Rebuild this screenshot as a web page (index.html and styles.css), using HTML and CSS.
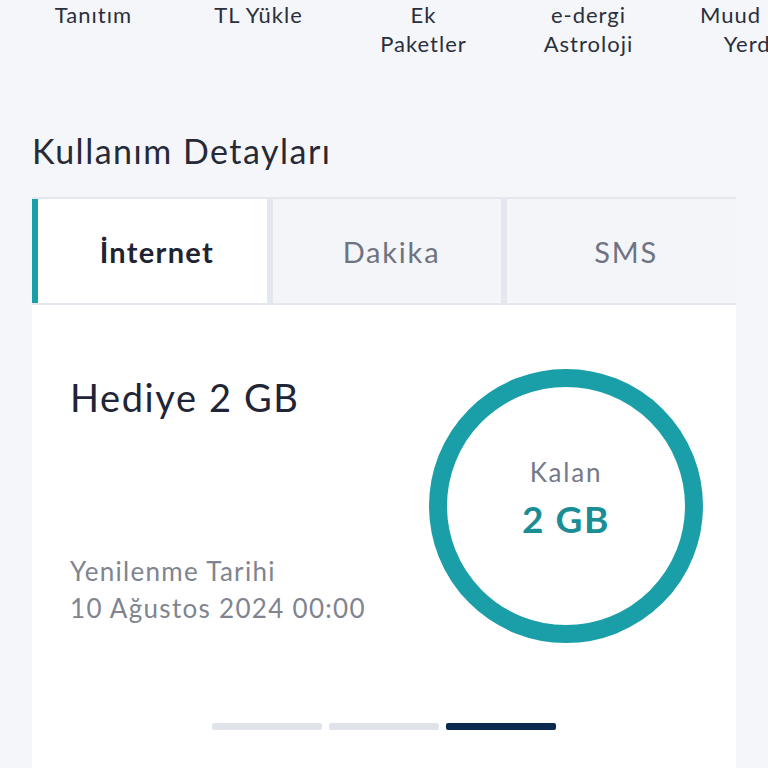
FILE: index.html
```html
<!DOCTYPE html>
<html lang="tr">
<head>
  <meta charset="utf-8">
  <title>Kullanım Detayları</title>
  <link rel="stylesheet" href="styles.css">
</head>
<body>
  <div class="shortcuts">
    <div class="shortcut"><span class="shortcut-label">Tanıtım</span></div>
    <div class="shortcut"><span class="shortcut-label">TL Yükle</span></div>
    <div class="shortcut"><span class="shortcut-label">Ek Paketler</span></div>
    <div class="shortcut"><span class="shortcut-label">e-dergi Astroloji</span></div>
    <div class="shortcut"><span class="shortcut-label">Muud Her Yerde</span></div>
  </div>

  <section class="usage">
    <h2 class="usage-title">Kullanım Detayları</h2>

    <div class="tabs">
      <div class="tab active">İnternet</div>
      <div class="tab">Dakika</div>
      <div class="tab">SMS</div>
    </div>

    <div class="usage-card">
      <div class="usage-body">
        <div class="usage-info">
          <div class="package-name">Hediye 2 GB</div>
          <div class="renewal">
            <div>Yenilenme Tarihi</div>
            <div>10 Ağustos 2024 00:00</div>
          </div>
        </div>
        <div class="ring">
          <div class="ring-label">Kalan</div>
          <div class="ring-value">2 GB</div>
        </div>
      </div>

      <div class="pager">
        <span class="pager-dot"></span>
        <span class="pager-dot"></span>
        <span class="pager-dot current"></span>
      </div>
    </div>
  </section>
</body>
</html>
```

FILE: styles.css
```css
body {
  margin: 0;
  font-family: Lato, "Noto Sans", sans-serif;
  background-color: #f5f6f9;
  color: #232838;
  overflow: hidden;
}

/* quick action row at the top */
.shortcuts {
  display: grid;
  grid-template-columns: repeat(5, 165px);
  padding-left: 11px;
  height: 58px;
  width: 900px;
}

.shortcut {
  display: flex;
  justify-content: center;
}

.shortcut-label {
  width: 110px;
  text-align: center;
  font-size: 22px;
  line-height: 29px;
  letter-spacing: 1px;
  color: #2a2f3c;
}

.usage {
  padding: 0 32px;
}

.usage-title {
  margin: 75px 0 28px;
  font-size: 34px;
  line-height: 36px;
  font-weight: 400;
  letter-spacing: 1.5px;
  color: #262a36;
}

/* tabs */
.tabs {
  display: flex;
  gap: 6px;
  padding: 2px 0;
  background-color: #e5e7ee;
}

.tab {
  flex: 1;
  height: 104px;
  display: flex;
  align-items: center;
  justify-content: center;
  padding-left: 9px;
  background-color: #f4f5f8;
  font-size: 29px;
  letter-spacing: 1.8px;
  color: #6e7382;
}

.tab.active {
  background-color: #fff;
  border-left: 6px solid #1a9fa8;
  color: #1f2433;
  font-weight: 700;
  letter-spacing: 1.3px;
}

/* usage card */
.usage-card {
  background-color: #fff;
  padding: 64px 33px 60px 38px;
  min-height: 420px;
}

.usage-body {
  display: flex;
  justify-content: space-between;
}

.usage-info {
  display: flex;
  flex-direction: column;
  justify-content: space-between;
}

.package-name {
  margin-top: 6px;
  font-size: 38px;
  line-height: 44px;
  letter-spacing: 1.6px;
  color: #1f2536;
}

.renewal {
  margin-bottom: 16px;
  font-size: 26px;
  line-height: 37px;
  letter-spacing: 1.3px;
  color: #80848f;
}

.ring {
  width: 274px;
  height: 274px;
  box-sizing: border-box;
  border: 18px solid #1a9fa8;
  border-radius: 50%;
  display: flex;
  flex-direction: column;
  align-items: center;
  justify-content: center;
  padding-bottom: 14px;
}

.ring-label {
  font-size: 26px;
  line-height: 30px;
  letter-spacing: 1.8px;
  color: #757a88;
}

.ring-value {
  margin-top: 10px;
  font-size: 37px;
  line-height: 44px;
  font-weight: 700;
  letter-spacing: 1.6px;
  color: #1b8d95;
}

.pager {
  display: flex;
  justify-content: center;
  gap: 7px;
  margin: 80px 0 0 -5px;
}

.pager-dot {
  width: 110px;
  height: 7px;
  border-radius: 2px;
  background-color: #e1e3ea;
}

.pager-dot.current {
  background-color: #0b2a4f;
}
```
